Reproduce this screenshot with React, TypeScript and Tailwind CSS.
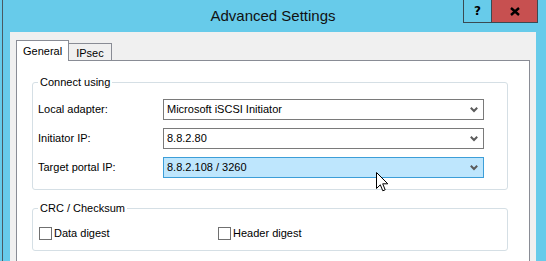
import React from 'react';

const Chevron: React.FC = () => (
  <svg width="8" height="6" viewBox="0 0 8 6" className="shrink-0">
    <path d="M0.8 0.8 L4 4 L7.2 0.8" fill="none" stroke="#5b5b5b" strokeWidth="2" />
  </svg>
);

const Combo: React.FC<{ value: string; hot?: boolean }> = ({ value, hot }) => (
  <div
    className={`w-[321px] h-[21px] flex items-center justify-between pl-[3px] pr-[5px] border ${
      hot ? 'border-[#3c9ed8] bg-[#bee6fd]' : 'border-[#7a7a7a] bg-white'
    }`}
  >
    <span>{value}</span>
    <Chevron />
  </div>
);

const Row: React.FC<{ label: string; value: string; hot?: boolean }> = ({ label, value, hot }) => (
  <div className="flex items-center">
    <span className="w-[125px]">{label}</span>
    <Combo value={value} hot={hot} />
  </div>
);

const Check: React.FC<{ label: string }> = ({ label }) => (
  <div className="flex items-center gap-[2px]">
    <span className="w-[13px] h-[13px] border border-[#707070] bg-white" />
    <span>{label}</span>
  </div>
);

export default function App() {
  return (
    <div className="w-[546px] h-[261px] overflow-hidden relative bg-[#67cbea] pl-[2px] font-['Liberation_Sans',Arial,sans-serif] text-[11px] leading-[13px] text-black">
      <div className="h-full border-l border-[#4a5a62] flex flex-col">
        {/* title bar */}
        <div className="h-[32px] shrink-0 flex items-center justify-center pr-[3px] text-[15px] leading-[18px] text-[#111]">
          Advanced Settings
        </div>

        {/* client area */}
        <div className="ml-[7px] w-[526px] flex-1 min-h-0 overflow-hidden bg-[#f0f0f0] pt-[8px] pl-[6px]">
          <div className="flex items-end h-[20px] relative z-10">
            <div className="h-[21px] -mb-px bg-white border-l border-t border-r border-[#898c95] px-[6px] pt-[4px]">
              General
            </div>
            <div className="h-[17px] bg-[#f0f0f0] border-t border-r border-[#898c95] px-[7px] pt-[3px]">
              IPsec
            </div>
          </div>

          <div className="w-[514px] h-[220px] border border-[#898c95] bg-white pl-[15px] pt-[15px]">
            <fieldset className="w-[476px] border border-[#d5dfe5] rounded-[3px] pl-[5px] pt-[10px] pb-[11px]">
              <legend className="px-[2px]">Connect using</legend>
              <div className="flex flex-col gap-[8px]">
                <Row label="Local adapter:" value="Microsoft iSCSI Initiator" />
                <Row label="Initiator IP:" value="8.8.2.80" />
                <Row label="Target portal IP:" value="8.8.2.108 / 3260" hot />
              </div>
            </fieldset>

            <fieldset className="mt-[12px] w-[476px] border border-[#d5dfe5] rounded-[3px] pl-[6px] pt-[12px] pb-[10px]">
              <legend className="-ml-px px-[2px]">CRC / Checksum</legend>
              <div className="flex">
                <div className="w-[179px]">
                  <Check label="Data digest" />
                </div>
                <Check label="Header digest" />
              </div>
            </fieldset>
          </div>
        </div>
      </div>

      {/* caption buttons */}
      <div className="absolute top-0 right-[8px] flex h-[23px] border border-t-0 border-[#3a4a52]">
        <div className="w-[28px] flex items-center justify-center bg-[#67cbea] border-r border-[#3a4a52] font-['DejaVu_Sans',sans-serif] font-bold text-[12px] pt-px">
          ?
        </div>
        <div className="w-[45px] flex items-center justify-center bg-[#c75050]">
          <svg width="10" height="9" viewBox="0 0 10 9">
            <path d="M1 1 L9 8 M9 1 L1 8" stroke="#000" strokeWidth="2.4" />
          </svg>
        </div>
      </div>

      {/* mouse pointer */}
      <svg className="absolute left-[376px] top-[172px]" width="13" height="21" viewBox="0 0 13 21">
        <path
          d="M0.5 0.5 L0.5 16.5 L4.3 12.8 L6.8 18.8 L9.2 17.8 L6.7 11.8 L11.8 11.8 Z"
          fill="#fff"
          stroke="#000"
          strokeWidth="1"
          strokeLinejoin="miter"
        />
      </svg>
    </div>
  );
}
